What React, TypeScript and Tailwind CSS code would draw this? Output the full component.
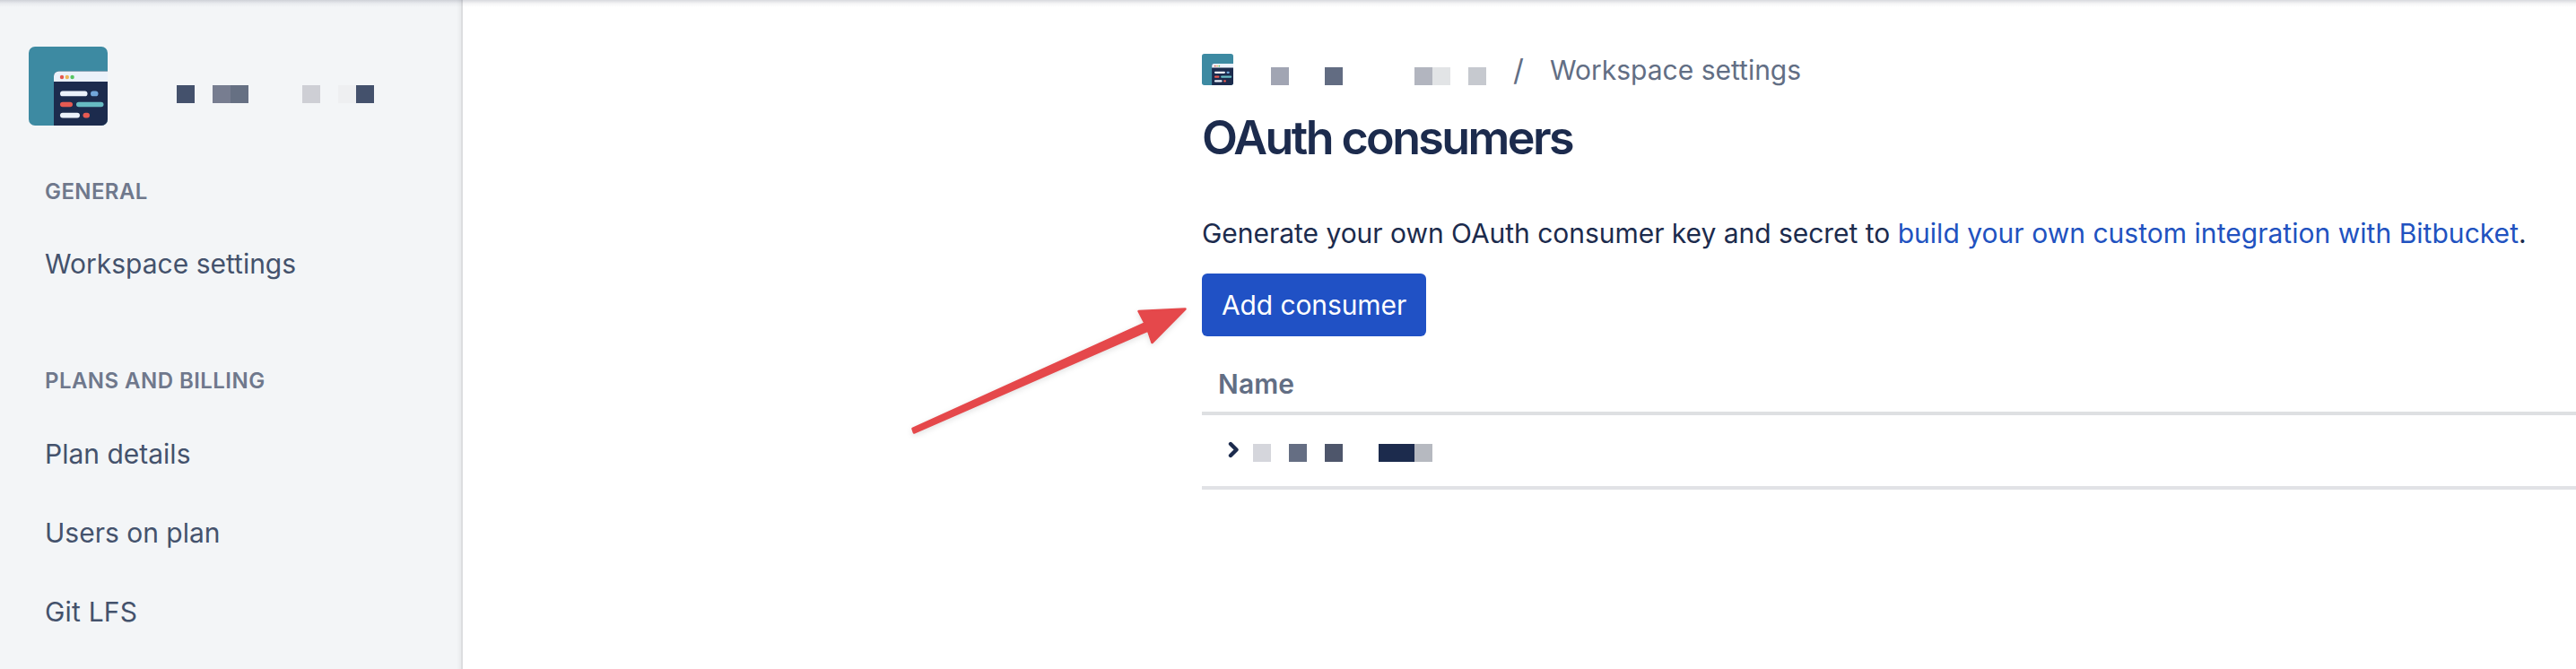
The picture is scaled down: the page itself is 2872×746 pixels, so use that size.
import React from "react";

function WorkspaceLogo({ className }: { className: string }) {
  return (
    <svg viewBox="0 0 88 88" className={className}>
      <clipPath id="logo-clip">
        <rect width="88" height="88" rx="7" />
      </clipPath>
      <g clipPath="url(#logo-clip)">
        <rect width="88" height="88" fill="#3d8aa2" />
        <path d="M28 88V33a5.500 5.500 0 0 1 5.500-5.500H88V88z" fill="#1c2b4d" />
        <path d="M28 39V33a5.500 5.500 0 0 1 5.500-5.500H88V39z" fill="#ebf1fa" />
        <circle cx="37" cy="34" r="2.200" fill="#e2574f" />
        <circle cx="42.800" cy="34" r="2.200" fill="#ecb558" />
        <circle cx="48.600" cy="34" r="2.200" fill="#57c563" />
        <rect x="35" y="49.500" width="30.500" height="5.800" rx="2.900" fill="#ebf1fa" />
        <rect x="69" y="49.500" width="8.500" height="5.800" rx="2.900" fill="#72a7db" />
        <rect x="35" y="61.700" width="14" height="5.600" rx="2.800" fill="#e65a52" />
        <rect x="53" y="61.700" width="30.500" height="5.600" rx="2.800" fill="#68bcc3" />
        <rect x="35" y="73.700" width="22" height="5.800" rx="2.900" fill="#ebf1fa" />
        <rect x="60.500" y="73.700" width="7.500" height="5.800" rx="2.900" fill="#e65a52" />
      </g>
    </svg>
  );
}

function Sidebar() {
  return (
    <aside className="flex h-full w-[516px] shrink-0 flex-col border-r-2 border-[#dcdddf] bg-[#f3f5f7] bg-[linear-gradient(to_left,#e9ebed,#f3f5f7_5px)]">
      <div className="flex h-[192px] items-start pt-[52px] pl-8">
        <WorkspaceLogo className="size-[88px]" />
        <div className="mt-[43px] ml-[77px] flex h-5">
          <span className="w-5 bg-[#44516c]" />
          <span className="ml-5 w-5 bg-[#777d90]" />
          <span className="w-5 bg-[#667083]" />
          <span className="ml-[60px] w-5 bg-[#cecfd5]" />
          <span className="ml-5 w-5 bg-[#eeeff1]" />
          <span className="w-5 bg-[#44516c]" />
        </div>
      </div>
      <nav className="flex flex-col pl-[50px] text-[30px] leading-[88px] text-[#44526c]">
        <h2 className="h-[58px] text-2xl leading-[44px] font-semibold tracking-[0.4px] text-[#6f788c]">
          GENERAL
        </h2>
        <a>Workspace settings</a>
        <h2 className="mt-[65px] h-[59px] text-2xl leading-[44px] font-semibold tracking-[0.45px] text-[#6f788c]">
          PLANS AND BILLING
        </h2>
        <a>Plan details</a>
        <a>Users on plan</a>
        <a className="tracking-[0.2px]">Git LFS</a>
      </nav>
    </aside>
  );
}

function Breadcrumb() {
  return (
    <div className="flex h-[44px] text-[30px] leading-[44px] text-[#626e84]">
      <WorkspaceLogo className="mt-[4px] size-[35px]" />
      <div className="mt-[19px] ml-[42px] flex h-5">
        <span className="w-5 bg-[#a1a5b3]" />
        <span className="ml-10 w-5 bg-[#626c82]" />
        <span className="ml-20 w-5 bg-[#b2b5bf]" />
        <span className="w-5 bg-[#e2e4e6]" />
        <span className="ml-5 w-5 bg-[#c6c9cf]" />
      </div>
      <span className="ml-[30px] w-[41px] text-[33px]">/</span>
      <span>Workspace settings</span>
    </div>
  );
}

function ConsumerTable() {
  return (
    <div className="mt-[31px] flex flex-col">
      <div className="h-[57px] border-b-4 border-[#dee0e2] pl-[18px] text-[30px] leading-[44px] font-semibold tracking-[0.1px] text-[#626e84]">
        Name
      </div>
      <div className="flex h-[83px] border-b-4 border-[#e1e2e6]">
        <svg viewBox="0 0 14 20" className="mt-[29px] ml-[28px] h-5 w-[14px]" fill="none">
          <path d="M4 3L10.500 9.500L4 16" stroke="#1c2b4d" strokeWidth="4.400" strokeLinecap="round" strokeLinejoin="round" />
        </svg>
        <div className="mt-[32px] ml-[15px] flex h-5">
          <span className="w-5 bg-[#d5d6dc]" />
          <span className="ml-5 w-5 bg-[#656e83]" />
          <span className="ml-5 w-5 bg-[#4e566b]" />
          <span className="ml-10 w-10 bg-[#1c2b4d]" />
          <span className="w-5 bg-[#b6b9c0]" />
        </div>
      </div>
    </div>
  );
}

function Arrow() {
  return (
    <svg viewBox="0 0 350 180" className="absolute top-[320px] left-[1000px] h-[180px] w-[350px] drop-shadow-[0_2px_3px_rgba(0,0,0,0.12)]">
      <path
        d="M17.500 158L276.500 40.500L269.500 27L321.500 24.500L284.500 62L280 48.500L19 162.500Z"
        fill="#e5484b"
        stroke="#e5484b"
        strokeWidth="2.500"
        strokeLinejoin="round"
      />
    </svg>
  );
}

export default function App() {
  return (
    <div className="relative flex h-[746px] w-[2872px] overflow-hidden bg-white font-['Inter','Liberation_Sans',sans-serif]">
      <Sidebar />
      <main className="flex grow flex-col pt-[56px] pl-[824px]">
        <Breadcrumb />
        <h1 className="mt-[22px] h-[64px] text-[52px] leading-[64px] font-semibold tracking-[-2.600px] text-[#1c2b4d]">
          OAuth consumers
        </h1>
        <p className="mt-[52px] h-[44px] text-[30px] leading-[44px] whitespace-nowrap text-[#1c2b4d]">
          <span className="tracking-[-0.03px]">Generate your own OAuth consumer key and secret to </span>
          <a className="tracking-[0.03px] text-[#2152c0]">build your own custom integration with Bitbucket</a>.
        </p>
        <button className="mt-[23px] flex h-[70px] w-[250px] items-center justify-center rounded-[6px] bg-[#2051c5] text-[30px] tracking-[-0.1px] text-white">
          Add consumer
        </button>
        <ConsumerTable />
      </main>
      <Arrow />
      <div className="absolute inset-x-0 top-0 h-[8px] bg-[linear-gradient(to_bottom,rgba(60,65,90,0.2),rgba(60,65,90,0.05)_4px,transparent)]" />
    </div>
  );
}
